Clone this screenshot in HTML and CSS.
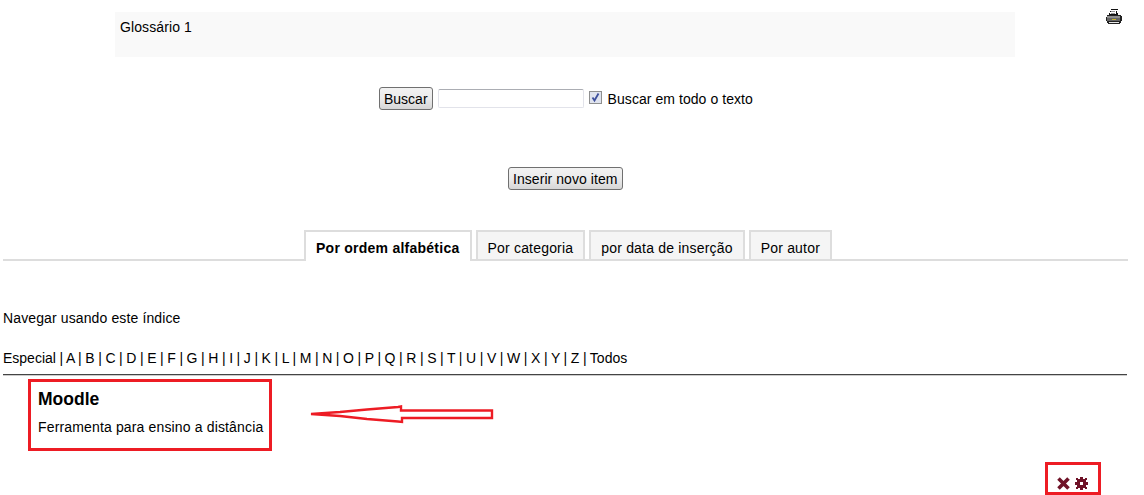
FILE: index.html
```html
<!DOCTYPE html>
<html lang="pt">
<head>
  <meta charset="UTF-8">
  <meta name="viewport" content="width=device-width, initial-scale=1.0">
  <title>Glossário 1</title>
  <link rel="stylesheet" href="styles.css">
</head>
<body>
  <div class="page-head">
    <div class="intro">Glossário 1</div>
    <a class="print-link" href="#" title="Imprimir">
      <svg width="17" height="17" viewBox="0 0 17 17" shape-rendering="crispEdges">
        <path d="M6 1h7v1h-1v3h1v2H4V5h1V3h1z" fill="#111"/>
        <path d="M6 2h6v1h-1v3H5V4h1z" fill="#fff"/>
        <path d="M6 3h4v1H6zM6 5h4v1H6z" fill="#999"/>
        <path d="M2 7h14v1h1v5h-1v2h-1v1H3v-1H2v-2H1V9h1z" fill="#222"/>
        <path d="M2 8h13v2H2z" fill="#8f8f8f"/>
        <path d="M2 10h13v3H2z" fill="#666"/>
        <path d="M7 11h4v1H7z" fill="#c9b62a"/>
        <path d="M4 14h10v1H4z" fill="#e8e8e8"/>
      </svg>
    </a>
  </div>

  <form class="search-row">
    <button type="button" class="btn">Buscar</button>
    <input type="text" class="search-input">
    <span class="fake-check">
      <svg width="11" height="11" viewBox="0 0 11 11"><path d="M2.500 5.500l2 3 4-7" fill="none" stroke="#3d4f9c" stroke-width="1.800"/></svg>
    </span>
    <label class="search-label">Buscar em todo o texto</label>
  </form>

  <div class="add-row">
    <button type="button" class="btn">Inserir novo item</button>
  </div>

  <ul class="tabs">
    <li class="tab active">Por ordem alfabética</li>
    <li class="tab">Por categoria</li>
    <li class="tab">por data de inserção</li>
    <li class="tab">Por autor</li>
  </ul>

  <p class="index-title">Navegar usando este índice</p>
  <p class="alphabet">Especial | A | B | C | D | E | F | G | H | I | J | K | L | M | N | O | P | Q | R | S | T | U | V | W | X | Y | Z | Todos</p>
  <hr class="rule">

  <div class="entry-row">
    <div class="entry">
      <h2>Moodle</h2>
      <p>Ferramenta para ensino a distância</p>
    </div>
    <svg class="arrow" width="184" height="19" viewBox="0 0 184 19">
      <path d="M1 9L30 7 57 4.500 88 2 91 1.500V5.500H182V13H92V17L88 16.500 57 14 30 11Z" fill="none" stroke="#ed1c24" stroke-width="2.400"/>
    </svg>
  </div>

  <div class="actions">
    <svg width="13" height="13" viewBox="0 0 13 13"><path d="M1.500 1.500l10 10M11.500 1.500l-10 10" stroke="#6f1227" stroke-width="3.600"/></svg>
    <svg width="13" height="13" viewBox="0 0 13 13" shape-rendering="crispEdges">
      <path d="M5 0h3v2h2V1h2v2h-1v2h2v3h-2v2h1v2h-2v-1H8v2H5v-2H3v1H1v-2h1V8H0V5h2V3H1V1h2v1h2zM5 5v3h3V5z" fill="#6f1227" fill-rule="evenodd"/>
    </svg>
  </div>
</body>
</html>
```

FILE: styles.css
```css
/* Glossary page */
html, body {
  margin: 0;
  padding: 0;
}

body {
  background: #fff;
  color: #000;
  font-family: "Liberation Sans", Arial, sans-serif;
  font-size: 14px;
  height: 495px;
  overflow: hidden;
}

.page-head {
  display: flex;
  align-items: flex-start;
  padding: 12px 0 0 115px;
}

.intro {
  width: 900px;
  height: 45px;
  padding: 7px 5px 0;
  box-sizing: border-box;
  background: #f9f9f9;
  letter-spacing: 0.1px;
}

.print-link {
  display: block;
  margin: -4px 0 0 90px;
}

.btn {
  height: 23px;
  padding: 0 4px;
  font-family: inherit;
  font-size: 14px;
  color: #000;
  border: 1px solid #707070;
  border-radius: 3px;
  background: linear-gradient(#f2f2f2, #ebebeb 50%, #d6d6d6);
}

.add-row .btn {
  letter-spacing: 0.06px;
}

.search-row {
  display: flex;
  align-items: center;
  height: 23px;
  margin: 30px 0 0 379px;
}

.search-input {
  width: 146px;
  height: 19px;
  margin-left: 5px;
  padding: 0;
  box-sizing: border-box;
  border: 1px solid #e2e3ea;
  border-top-color: #abadb3;
  border-radius: 2px;
}

.fake-check {
  display: flex;
  align-items: center;
  justify-content: center;
  width: 13px;
  height: 13px;
  margin: -2px 0 0 5px;
  box-sizing: border-box;
  border: 1px solid #8e8f8f;
  background: #dfe3ee;
}

.search-label {
  margin: 1px 0 0 6px;
  letter-spacing: 0.06px;
}

.add-row {
  margin: 57px 0 0 508px;
}

.tabs {
  display: flex;
  gap: 4px;
  height: 29px;
  margin: 40px 16px 0 3px;
  padding: 0 0 0 301px;
  list-style: none;
  border-bottom: 2px solid #ddd;
}

.tab {
  height: 29px;
  padding: 8px 10px 0;
  box-sizing: border-box;
  border: 2px solid #ddd;
  border-bottom: 0;
  background: #f5f5f5;
  letter-spacing: 0.19px;
}

.tab.active {
  height: 31px;
  background: #fff;
  font-weight: bold;
  letter-spacing: 0.25px;
}

.index-title {
  margin: 49px 0 0 3px;
  line-height: 16px;
  letter-spacing: 0.12px;
}

.alphabet {
  margin: 24px 0 0 3px;
  line-height: 16px;
  word-spacing: -0.32px;
}

.rule {
  height: 0;
  margin: 8px 17px 0 3px;
  border: 0;
  border-top: 1px solid #444;
  border-bottom: 1px solid #ccc;
}

.entry-row {
  display: flex;
  margin: 3px 0 0 28px;
}

.entry {
  width: 244px;
  height: 72px;
  padding: 8px 0 0 7px;
  box-sizing: border-box;
  border: 3px solid #ed1c24;
}

.entry h2 {
  margin: 0;
  font-size: 17.5px;
  line-height: 19px;
}

.entry p {
  margin: 10px 0 0;
  line-height: 16px;
  letter-spacing: 0.15px;
}

.arrow {
  margin: 26px 0 0 38px;
}

.actions {
  display: flex;
  align-items: center;
  gap: 5px;
  width: 56px;
  height: 33px;
  margin: 11px 0 0 1045px;
  padding: 10px 0 0 9px;
  box-sizing: border-box;
  border: 3px solid #ed1c24;
}
```
